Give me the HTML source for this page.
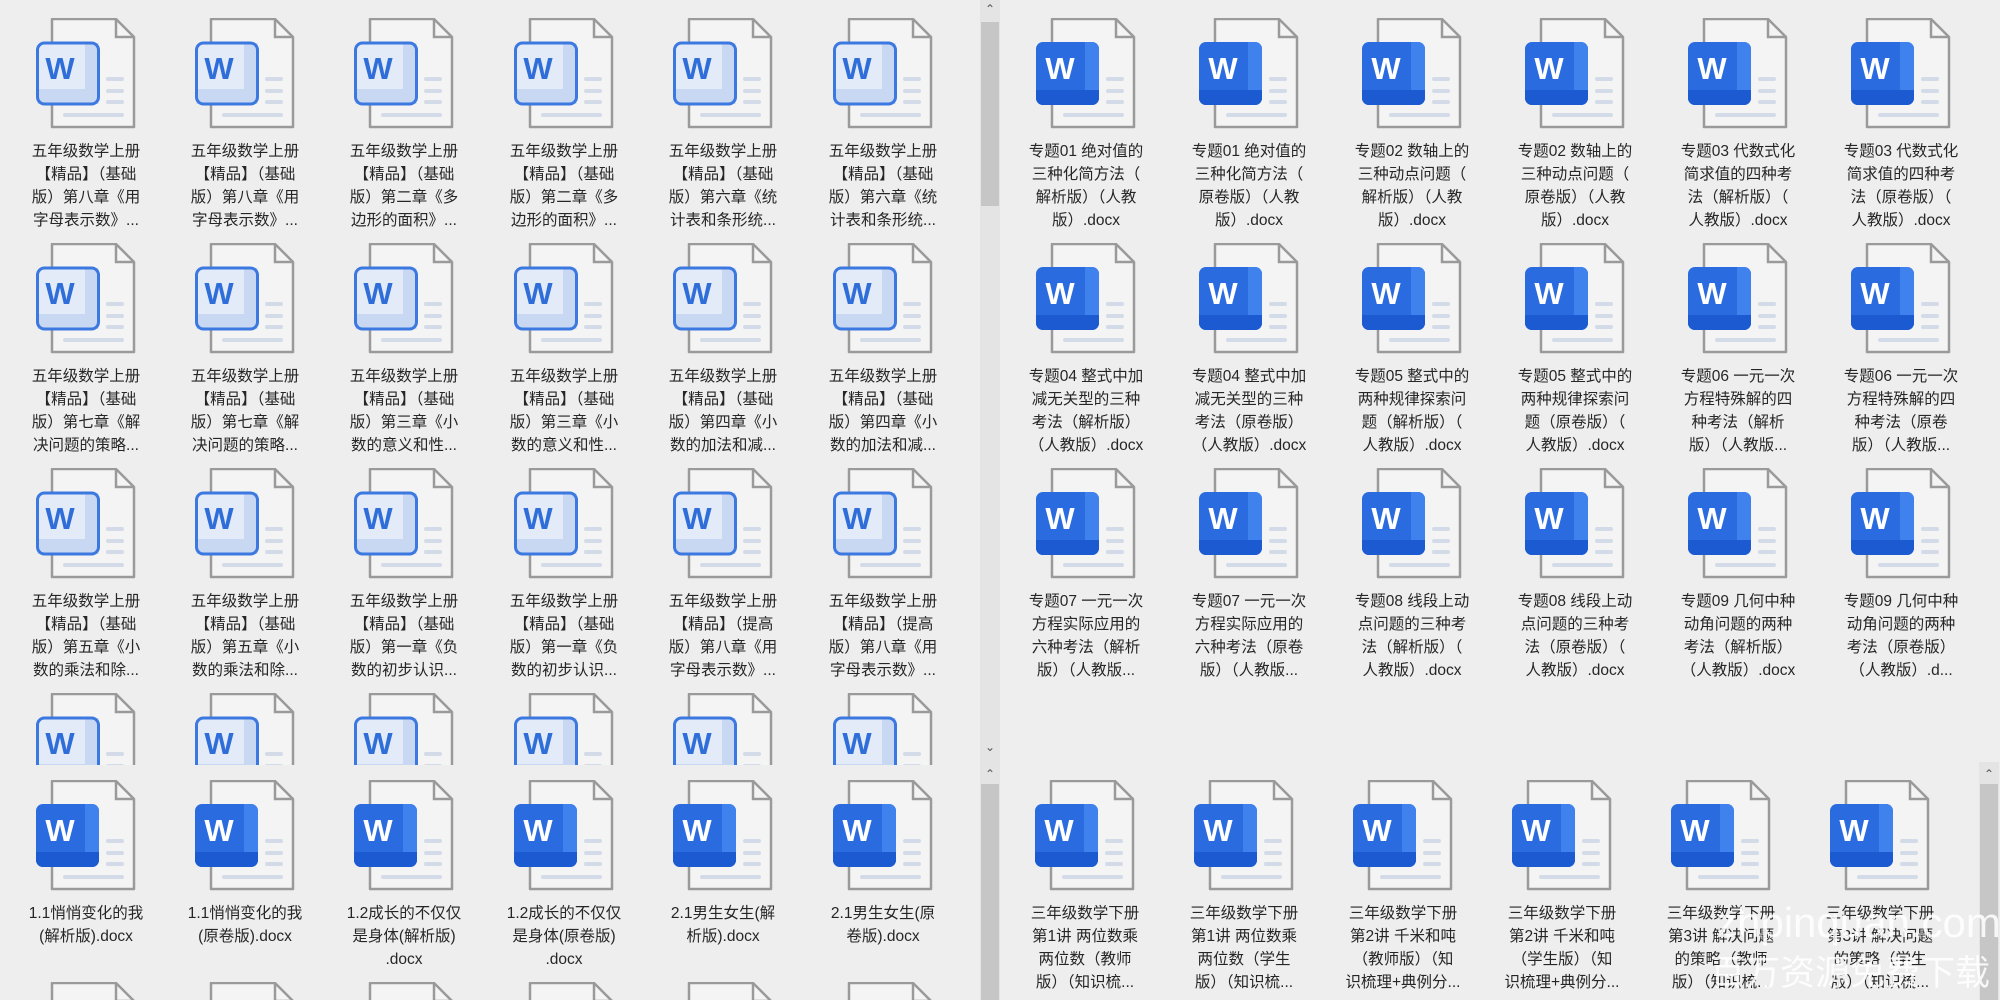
<!DOCTYPE html>
<html><head><meta charset="utf-8"><style>
*{margin:0;padding:0;box-sizing:border-box}
html,body{width:2000px;height:1000px;overflow:hidden}
body{background:#eeeeee;position:relative;font-family:"Liberation Sans","Noto Sans CJK SC",sans-serif}
.p{position:absolute;overflow:hidden}
.c{position:absolute;width:156px;height:230px}
.c svg{position:absolute;left:28px;top:0;width:100px;height:112px}
.c div{position:absolute;top:122px;left:0;width:156px;text-align:center;font-size:15.5px;line-height:23px;color:#262626;white-space:nowrap}
.sb{position:absolute;width:20px;background:#e4e4e4;overflow:hidden}
.th{position:absolute;left:1px;width:18px;background:#c6c6c6}
.ar{position:absolute;left:0;width:20px;text-align:center;font-size:12px;color:#555}
.wm{position:absolute;color:rgba(255,255,255,0.85);white-space:nowrap}
</style></head><body>
<svg width="0" height="0" style="position:absolute">
<defs>
<g id="doc">
<path d="M16 1 H80 L98 19 V109 H16 Z" fill="#f4f4f4" stroke="#9a9a9a" stroke-width="2.5" stroke-linejoin="round"/>
<path d="M80 1 V19 H98" fill="none" stroke="#9a9a9a" stroke-width="2.5"/>
<rect x="70" y="59" width="18" height="4" rx="2" fill="#d3dbe8"/>
<rect x="70" y="71" width="18" height="4" rx="2" fill="#d3dbe8"/>
<rect x="70" y="82" width="18" height="4" rx="2" fill="#d3dbe8"/>
<rect x="27" y="95" width="61" height="4" rx="2" fill="#d3dbe8"/>
</g>
<g id="light">
<use href="#doc"/>
<rect x="1.5" y="25" width="61" height="61" rx="7" fill="#e3ebf9"/>
<rect x="49" y="25" width="13.5" height="61" fill="#c8d8f3"/>
<rect x="1.5" y="71" width="61" height="15" fill="#c8d8f3"/>
<rect x="1.5" y="25" width="61" height="61" rx="7" fill="none" stroke="#3b78e0" stroke-width="3"/>
<text x="24" y="61" font-family="Liberation Sans" font-weight="bold" font-size="31" fill="#2f6ed8" text-anchor="middle">W</text>
</g>
<g id="solid">
<use href="#doc"/>
<rect x="0" y="24" width="63" height="63" rx="7" fill="#2a6be0"/>
<path d="M49 24 H56 A7 7 0 0 1 63 31 V80 A7 7 0 0 1 56 87 H49 Z" fill="#3f82ee"/>
<path d="M0 72 H63 V80 A7 7 0 0 1 56 87 H7 A7 7 0 0 1 0 80 Z" fill="#1c5ad2"/>
<text x="24" y="61" font-family="Liberation Sans" font-weight="bold" font-size="31" fill="#fff" text-anchor="middle">W</text>
</g>
</defs></svg>

<!-- TOP LEFT -->
<div class="p" style="left:0;top:0;width:980px;height:765px">
<div class="c" style="left:8px;top:18px"><svg><use href="#light"/></svg><div>五年级数学上册<br>【精品】（基础<br>版）第八章《用<br>字母表示数》...</div></div>
<div class="c" style="left:167px;top:18px"><svg><use href="#light"/></svg><div>五年级数学上册<br>【精品】（基础<br>版）第八章《用<br>字母表示数》...</div></div>
<div class="c" style="left:326px;top:18px"><svg><use href="#light"/></svg><div>五年级数学上册<br>【精品】（基础<br>版）第二章《多<br>边形的面积》...</div></div>
<div class="c" style="left:486px;top:18px"><svg><use href="#light"/></svg><div>五年级数学上册<br>【精品】（基础<br>版）第二章《多<br>边形的面积》...</div></div>
<div class="c" style="left:645px;top:18px"><svg><use href="#light"/></svg><div>五年级数学上册<br>【精品】（基础<br>版）第六章《统<br>计表和条形统...</div></div>
<div class="c" style="left:805px;top:18px"><svg><use href="#light"/></svg><div>五年级数学上册<br>【精品】（基础<br>版）第六章《统<br>计表和条形统...</div></div>

<div class="c" style="left:8px;top:243px"><svg><use href="#light"/></svg><div>五年级数学上册<br>【精品】（基础<br>版）第七章《解<br>决问题的策略...</div></div>
<div class="c" style="left:167px;top:243px"><svg><use href="#light"/></svg><div>五年级数学上册<br>【精品】（基础<br>版）第七章《解<br>决问题的策略...</div></div>
<div class="c" style="left:326px;top:243px"><svg><use href="#light"/></svg><div>五年级数学上册<br>【精品】（基础<br>版）第三章《小<br>数的意义和性...</div></div>
<div class="c" style="left:486px;top:243px"><svg><use href="#light"/></svg><div>五年级数学上册<br>【精品】（基础<br>版）第三章《小<br>数的意义和性...</div></div>
<div class="c" style="left:645px;top:243px"><svg><use href="#light"/></svg><div>五年级数学上册<br>【精品】（基础<br>版）第四章《小<br>数的加法和减...</div></div>
<div class="c" style="left:805px;top:243px"><svg><use href="#light"/></svg><div>五年级数学上册<br>【精品】（基础<br>版）第四章《小<br>数的加法和减...</div></div>

<div class="c" style="left:8px;top:468px"><svg><use href="#light"/></svg><div>五年级数学上册<br>【精品】（基础<br>版）第五章《小<br>数的乘法和除...</div></div>
<div class="c" style="left:167px;top:468px"><svg><use href="#light"/></svg><div>五年级数学上册<br>【精品】（基础<br>版）第五章《小<br>数的乘法和除...</div></div>
<div class="c" style="left:326px;top:468px"><svg><use href="#light"/></svg><div>五年级数学上册<br>【精品】（基础<br>版）第一章《负<br>数的初步认识...</div></div>
<div class="c" style="left:486px;top:468px"><svg><use href="#light"/></svg><div>五年级数学上册<br>【精品】（基础<br>版）第一章《负<br>数的初步认识...</div></div>
<div class="c" style="left:645px;top:468px"><svg><use href="#light"/></svg><div>五年级数学上册<br>【精品】（提高<br>版）第八章《用<br>字母表示数》...</div></div>
<div class="c" style="left:805px;top:468px"><svg><use href="#light"/></svg><div>五年级数学上册<br>【精品】（提高<br>版）第八章《用<br>字母表示数》...</div></div>

<div class="c" style="left:8px;top:693px;height:72px"><svg><use href="#light"/></svg></div>
<div class="c" style="left:167px;top:693px;height:72px"><svg><use href="#light"/></svg></div>
<div class="c" style="left:326px;top:693px;height:72px"><svg><use href="#light"/></svg></div>
<div class="c" style="left:486px;top:693px;height:72px"><svg><use href="#light"/></svg></div>
<div class="c" style="left:645px;top:693px;height:72px"><svg><use href="#light"/></svg></div>
<div class="c" style="left:805px;top:693px;height:72px"><svg><use href="#light"/></svg></div>
</div>
<div class="sb" style="left:980px;top:0;height:765px"><div class="ar" style="top:2px">&#8963;</div><div class="th" style="top:22px;height:184px"></div><div class="ar" style="top:740px">&#8964;</div></div>

<!-- TOP RIGHT -->
<div class="p" style="left:1000px;top:0;width:1000px;height:765px">
<div class="c" style="left:8px;top:18px"><svg><use href="#solid"/></svg><div>专题01 绝对值的<br>三种化简方法（<br>解析版）（人教<br>版）.docx</div></div>
<div class="c" style="left:171px;top:18px"><svg><use href="#solid"/></svg><div>专题01 绝对值的<br>三种化简方法（<br>原卷版）（人教<br>版）.docx</div></div>
<div class="c" style="left:334px;top:18px"><svg><use href="#solid"/></svg><div>专题02 数轴上的<br>三种动点问题（<br>解析版）（人教<br>版）.docx</div></div>
<div class="c" style="left:497px;top:18px"><svg><use href="#solid"/></svg><div>专题02 数轴上的<br>三种动点问题（<br>原卷版）（人教<br>版）.docx</div></div>
<div class="c" style="left:660px;top:18px"><svg><use href="#solid"/></svg><div>专题03 代数式化<br>简求值的四种考<br>法（解析版）（<br>人教版）.docx</div></div>
<div class="c" style="left:823px;top:18px"><svg><use href="#solid"/></svg><div>专题03 代数式化<br>简求值的四种考<br>法（原卷版）（<br>人教版）.docx</div></div>

<div class="c" style="left:8px;top:243px"><svg><use href="#solid"/></svg><div>专题04 整式中加<br>减无关型的三种<br>考法（解析版）<br>（人教版）.docx</div></div>
<div class="c" style="left:171px;top:243px"><svg><use href="#solid"/></svg><div>专题04 整式中加<br>减无关型的三种<br>考法（原卷版）<br>（人教版）.docx</div></div>
<div class="c" style="left:334px;top:243px"><svg><use href="#solid"/></svg><div>专题05 整式中的<br>两种规律探索问<br>题（解析版）（<br>人教版）.docx</div></div>
<div class="c" style="left:497px;top:243px"><svg><use href="#solid"/></svg><div>专题05 整式中的<br>两种规律探索问<br>题（原卷版）（<br>人教版）.docx</div></div>
<div class="c" style="left:660px;top:243px"><svg><use href="#solid"/></svg><div>专题06 一元一次<br>方程特殊解的四<br>种考法（解析<br>版）（人教版...</div></div>
<div class="c" style="left:823px;top:243px"><svg><use href="#solid"/></svg><div>专题06 一元一次<br>方程特殊解的四<br>种考法（原卷<br>版）（人教版...</div></div>

<div class="c" style="left:8px;top:468px"><svg><use href="#solid"/></svg><div>专题07 一元一次<br>方程实际应用的<br>六种考法（解析<br>版）（人教版...</div></div>
<div class="c" style="left:171px;top:468px"><svg><use href="#solid"/></svg><div>专题07 一元一次<br>方程实际应用的<br>六种考法（原卷<br>版）（人教版...</div></div>
<div class="c" style="left:334px;top:468px"><svg><use href="#solid"/></svg><div>专题08 线段上动<br>点问题的三种考<br>法（解析版）（<br>人教版）.docx</div></div>
<div class="c" style="left:497px;top:468px"><svg><use href="#solid"/></svg><div>专题08 线段上动<br>点问题的三种考<br>法（原卷版）（<br>人教版）.docx</div></div>
<div class="c" style="left:660px;top:468px"><svg><use href="#solid"/></svg><div>专题09 几何中种<br>动角问题的两种<br>考法（解析版）<br>（人教版）.docx</div></div>
<div class="c" style="left:823px;top:468px"><svg><use href="#solid"/></svg><div>专题09 几何中种<br>动角问题的两种<br>考法（原卷版）<br>（人教版）.d...</div></div>
</div>

<!-- BOTTOM LEFT -->
<div class="p" style="left:0;top:765px;width:980px;height:235px">
<div class="c" style="left:8px;top:15px"><svg><use href="#solid"/></svg><div>1.1悄悄变化的我<br>(解析版).docx</div></div>
<div class="c" style="left:167px;top:15px"><svg><use href="#solid"/></svg><div>1.1悄悄变化的我<br>(原卷版).docx</div></div>
<div class="c" style="left:326px;top:15px"><svg><use href="#solid"/></svg><div>1.2成长的不仅仅<br>是身体(解析版)<br>.docx</div></div>
<div class="c" style="left:486px;top:15px"><svg><use href="#solid"/></svg><div>1.2成长的不仅仅<br>是身体(原卷版)<br>.docx</div></div>
<div class="c" style="left:645px;top:15px"><svg><use href="#solid"/></svg><div>2.1男生女生(解<br>析版).docx</div></div>
<div class="c" style="left:805px;top:15px"><svg><use href="#solid"/></svg><div>2.1男生女生(原<br>卷版).docx</div></div>
<div class="c" style="left:8px;top:217px;height:18px"><svg><use href="#solid"/></svg></div>
<div class="c" style="left:167px;top:217px;height:18px"><svg><use href="#solid"/></svg></div>
<div class="c" style="left:326px;top:217px;height:18px"><svg><use href="#solid"/></svg></div>
<div class="c" style="left:486px;top:217px;height:18px"><svg><use href="#solid"/></svg></div>
<div class="c" style="left:645px;top:217px;height:18px"><svg><use href="#solid"/></svg></div>
<div class="c" style="left:805px;top:217px;height:18px"><svg><use href="#solid"/></svg></div>
</div>
<div class="sb" style="left:980px;top:765px;height:235px"><div class="ar" style="top:2px">&#8963;</div><div class="th" style="top:19px;height:216px"></div></div>

<!-- BOTTOM RIGHT -->
<div class="p" style="left:1000px;top:765px;width:979px;height:235px">
<div class="c" style="left:7px;top:15px"><svg><use href="#solid"/></svg><div>三年级数学下册<br>第1讲 两位数乘<br>两位数（教师<br>版）（知识梳...</div></div>
<div class="c" style="left:166px;top:15px"><svg><use href="#solid"/></svg><div>三年级数学下册<br>第1讲 两位数乘<br>两位数（学生<br>版）（知识梳...</div></div>
<div class="c" style="left:325px;top:15px"><svg><use href="#solid"/></svg><div>三年级数学下册<br>第2讲 千米和吨<br>（教师版）（知<br>识梳理+典例分...</div></div>
<div class="c" style="left:484px;top:15px"><svg><use href="#solid"/></svg><div>三年级数学下册<br>第2讲 千米和吨<br>（学生版）（知<br>识梳理+典例分...</div></div>
<div class="c" style="left:643px;top:15px"><svg><use href="#solid"/></svg><div>三年级数学下册<br>第3讲 解决问题<br>的策略（教师<br>版）（知识梳...</div></div>
<div class="c" style="left:802px;top:15px"><svg><use href="#solid"/></svg><div>三年级数学下册<br>第3讲 解决问题<br>的策略（学生<br>版）（知识梳...</div></div>
</div>
<div class="sb" style="left:1979px;top:762px;height:238px"><div class="ar" style="top:5px">&#8963;</div><div class="th" style="top:22px;height:216px"></div></div>

<div class="wm" style="left:1716px;top:898px;font-size:42px;line-height:50px;font-family:'Liberation Sans',sans-serif">zhpinquan.com</div>
<div class="wm" style="left:1710px;top:951px;font-size:35px;line-height:40px;font-family:'Noto Sans CJK SC',sans-serif">百万资源免费下载</div>
</body></html>
